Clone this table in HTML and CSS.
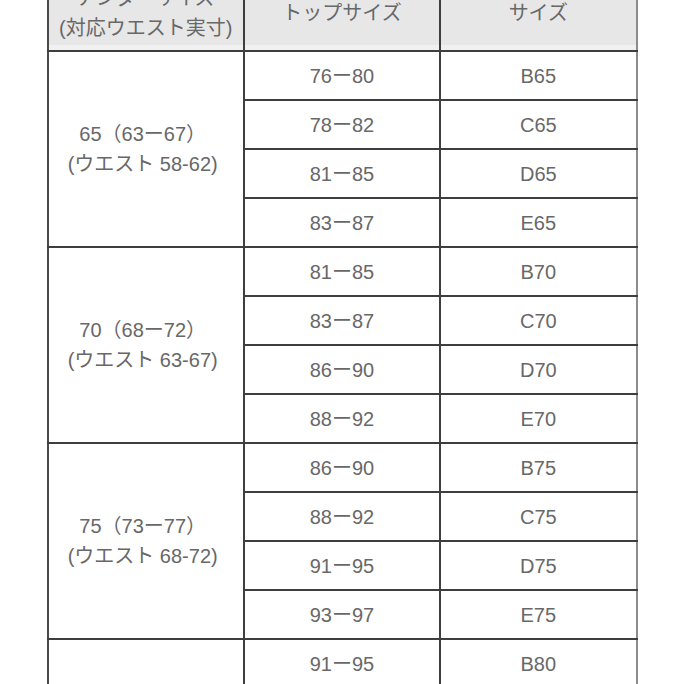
FILE: index.html
```html
<!DOCTYPE html>
<html lang="ja">
<head>
<meta charset="utf-8">
<link rel="stylesheet" href="styles.css">
</head>
<body>
<table class="size-table">
  <thead>
    <tr>
      <th class="col">アンダーサイズ<br>(対応ウエスト実寸)</th>
      <th class="col">トップサイズ</th>
      <th class="col last">サイズ</th>
    </tr>
  </thead>
  <tbody>
    <tr><td class="under" rowspan="4">65（63ー67）<br>(ウエスト 58-62)</td><td>76ー80</td><td class="last">B65</td></tr>
    <tr><td>78ー82</td><td class="last">C65</td></tr>
    <tr><td>81ー85</td><td class="last">D65</td></tr>
    <tr><td>83ー87</td><td class="last">E65</td></tr>
    <tr><td class="under" rowspan="4">70（68ー72）<br>(ウエスト 63-67)</td><td>81ー85</td><td class="last">B70</td></tr>
    <tr><td>83ー87</td><td class="last">C70</td></tr>
    <tr><td>86ー90</td><td class="last">D70</td></tr>
    <tr><td>88ー92</td><td class="last">E70</td></tr>
    <tr><td class="under" rowspan="4">75（73ー77）<br>(ウエスト 68-72)</td><td>86ー90</td><td class="last">B75</td></tr>
    <tr><td>88ー92</td><td class="last">C75</td></tr>
    <tr><td>91ー95</td><td class="last">D75</td></tr>
    <tr><td>93ー97</td><td class="last">E75</td></tr>
    <tr><td class="under"></td><td>91ー95</td><td class="last">B80</td></tr>
  </tbody>
</table>
</body>
</html>
```

FILE: styles.css
```css
html, body {
  margin: 0;
  padding: 0;
  background: #ffffff;
  overflow: hidden;
}
body {
  height: 684px;
}
.size-table {
  border-collapse: collapse;
  margin: -26px auto 0;
  width: 591px;
  table-layout: fixed;
  font-family: "Liberation Sans", "Noto Sans CJK JP", sans-serif;
  font-size: 20px;
  color: #686868;
}
.size-table th,
.size-table td {
  border: 2px solid #3e3e3e;
  text-align: center;
  vertical-align: middle;
  padding: 0;
  font-weight: normal;
}
.size-table th {
  background: #e7e7e7;
  height: 74px;
  line-height: 30px;
  box-shadow: inset 0 -5px 0 #f1f1f1;
}
.size-table td {
  height: 47px;
  line-height: 30px;
}
.size-table .under {
  line-height: 30px;
  padding-right: 6px;
  border-left-color: #4a4a4a;
}
.size-table th:first-child {
  border-left-color: #4a4a4a;
}
.size-table .last {
  border-right: 2px solid #8c8c8c;
}
```
